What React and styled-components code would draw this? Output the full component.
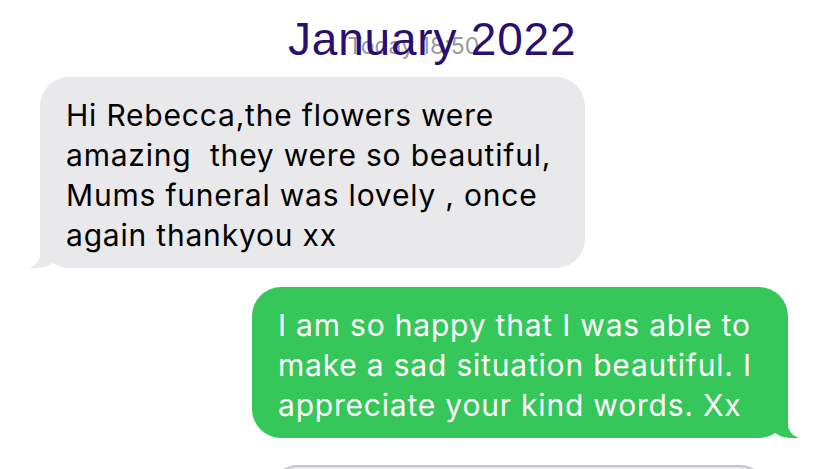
import React from "react";
import styled, { createGlobalStyle } from "styled-components";

const Global = createGlobalStyle`
  html, body { margin: 0; padding: 0; background: #ffffff; }
  #root { width: 827px; height: 469px; }
`;

const Page = styled.div`
  width: 827px;
  height: 469px;
  overflow: hidden;
  background: #ffffff;
  display: flex;
  flex-direction: column;
  font-family: Inter, "Noto Sans", sans-serif;
`;

const Header = styled.div`
  position: relative;
  flex-shrink: 0;
  height: 77px;
  display: flex;
  justify-content: center;
  align-items: flex-end;
`;

const Stamp = styled.div`
  font-family: Inter, "Noto Sans", sans-serif;
  font-size: 23px;
  line-height: 23px;
  color: #9a9a9e;
  padding-bottom: 19px;
  white-space: nowrap;
`;

const Title = styled.div`
  position: absolute;
  left: 288px;
  top: 13px;
  font-family: "Liberation Sans", Arial, sans-serif;
  font-size: 46px;
  line-height: 52px;
  letter-spacing: 0.8px;
  color: #2a0f73;
  white-space: nowrap;
`;

const Thread = styled.div`
  flex-shrink: 0;
  display: flex;
  flex-direction: column;
  padding: 0 39px 0 40px;
`;

const Bubble = styled.div`
  position: relative;
  flex-shrink: 0;
  align-self: ${(p) => (p.$out ? "flex-end" : "flex-start")};
  width: ${(p) => p.$w}px;
  box-sizing: border-box;
  margin-top: ${(p) => p.$gap || 0}px;
  padding: 18px 16px 13px 26px;
  border-radius: 29px;
  background: ${(p) => (p.$out ? "#35c759" : "#e9e9eb")};
  color: ${(p) => (p.$out ? "#ffffff" : "#000000")};
  font-size: 30px;
  line-height: 40px;
  letter-spacing: 0.8px;
  z-index: 0;

  &::before {
    content: "";
    position: absolute;
    bottom: 0;
    ${(p) => (p.$out ? "right: -10px;" : "left: -10px;")}
    width: 32px;
    height: 30px;
    background: ${(p) => (p.$out ? "#35c759" : "#e9e9eb")};
    ${(p) =>
      p.$out
        ? "border-bottom-left-radius: 24px;"
        : "border-bottom-right-radius: 24px;"}
    z-index: -1;
  }

  &::after {
    content: "";
    position: absolute;
    bottom: 0;
    ${(p) => (p.$out ? "right: -16px;" : "left: -16px;")}
    width: 16px;
    height: 32px;
    background: #ffffff;
    ${(p) =>
      p.$out
        ? "border-bottom-left-radius: 14px;"
        : "border-bottom-right-radius: 14px;"}
    z-index: -1;
  }
`;

const Line = styled.div`
  white-space: pre;
`;

const Peek = styled.div`
  flex-shrink: 0;
  align-self: flex-end;
  margin-top: 27px;
  margin-right: 20px;
  width: 498px;
  height: 40px;
  box-sizing: border-box;
  border-radius: 28px 28px 0 0;
  background: #e9e9eb;
  border-top: 2px solid #c4c4c8;
`;

const incoming = [
  "Hi Rebecca,the flowers were",
  "amazing  they were so beautiful,",
  "Mums funeral was lovely , once",
  "again thankyou xx",
];

const outgoing = [
  "I am so happy that I was able to",
  "make a sad situation beautiful. I",
  "appreciate your kind words. Xx",
];

export default function App() {
  return (
    <>
      <Global />
      <Page>
        <Header>
          <Stamp>Today 18:50</Stamp>
          <Title>January 2022</Title>
        </Header>
        <Thread>
          <Bubble $w={545}>
            {incoming.map((t) => (
              <Line key={t}>{t}</Line>
            ))}
          </Bubble>
          <Bubble $out $w={536} $gap={19}>
            {outgoing.map((t) => (
              <Line key={t}>{t}</Line>
            ))}
          </Bubble>
          <Peek />
        </Thread>
      </Page>
    </>
  );
}
